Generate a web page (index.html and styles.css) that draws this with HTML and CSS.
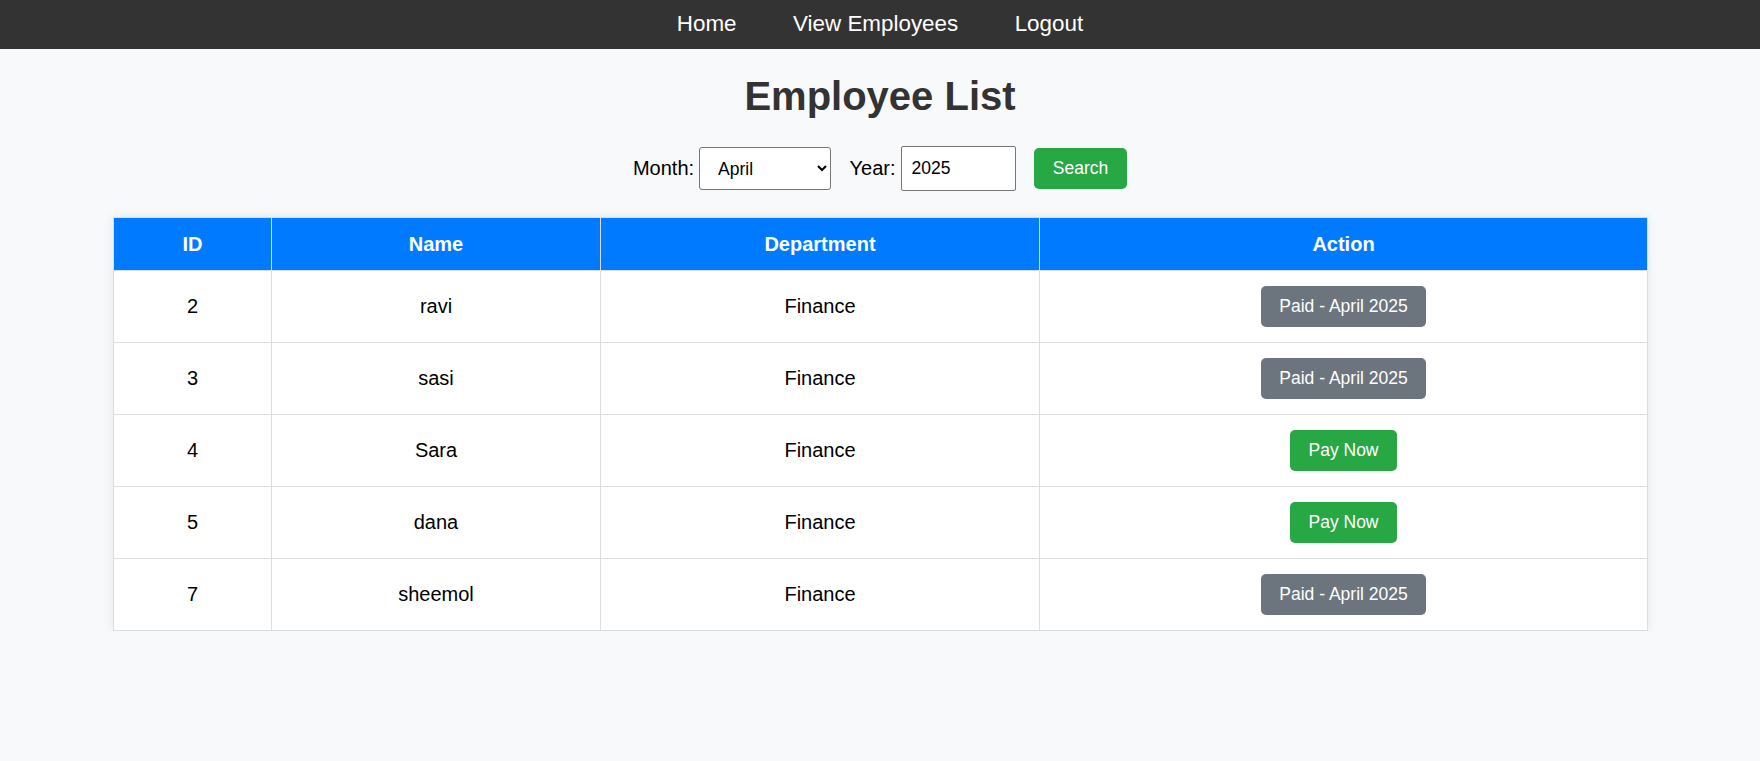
FILE: index.html
```html
<!DOCTYPE html>
<html lang="en">
<head>
<meta charset="utf-8">
<title>Employee List</title>
<link rel="stylesheet" href="styles.css">
</head>
<body>
<nav class="topnav">
  <a href="#">Home</a>
  <a href="#">View Employees</a>
  <a href="#">Logout</a>
</nav>
<h1 class="title">Employee List</h1>
<form class="filter">
  <label class="lbl" for="month">Month:</label>
  <select id="month" class="ctl sel">
    <option>January</option><option>February</option><option>March</option>
    <option selected>April</option><option>May</option><option>June</option>
    <option>July</option><option>August</option><option>September</option>
    <option>October</option><option>November</option><option>December</option>
  </select>
  <label class="lbl" for="year">Year:</label>
  <input id="year" class="ctl inp" type="number" value="2025">
  <button type="button" class="btn btn-green search">Search</button>
</form>
<div class="wrap">
  <table class="emp">
    <colgroup>
      <col class="c1"><col class="c2"><col class="c3"><col class="c4">
    </colgroup>
    <thead>
      <tr><th>ID</th><th>Name</th><th>Department</th><th>Action</th></tr>
    </thead>
    <tbody>
      <tr><td>2</td><td>ravi</td><td>Finance</td><td><span class="btn btn-gray">Paid - April 2025</span></td></tr>
      <tr><td>3</td><td>sasi</td><td>Finance</td><td><span class="btn btn-gray">Paid - April 2025</span></td></tr>
      <tr><td>4</td><td>Sara</td><td>Finance</td><td><span class="btn btn-green">Pay Now</span></td></tr>
      <tr><td>5</td><td>dana</td><td>Finance</td><td><span class="btn btn-green">Pay Now</span></td></tr>
      <tr><td>7</td><td>sheemol</td><td>Finance</td><td><span class="btn btn-gray">Paid - April 2025</span></td></tr>
    </tbody>
  </table>
</div>
</body>
</html>
```
FILE: styles.css
```css
* { box-sizing: border-box; }
body {
  margin: 0;
  font-family: "Liberation Sans", Arial, sans-serif;
  font-size: 20px;
  background: #f8f9fa;
  color: #000;
}
.topnav {
  background: #333;
  height: 49px;
  display: flex;
  justify-content: center;
  align-items: center;
  gap: 56.5px;
  padding-bottom: 1px;
}
.topnav a {
  color: #fff;
  text-decoration: none;
  font-size: 22.4px;
  line-height: 26px;
}
.title {
  margin: 24px 0 27px;
  font-size: 40px;
  line-height: 46px;
  font-weight: bold;
  text-align: center;
  color: #333;
}
.filter {
  display: flex;
  justify-content: center;
  align-items: center;
  height: 45px;
}
.lbl {
  font-size: 20px;
  margin-right: 5px;
}
.ctl {
  font-family: "Liberation Sans", Arial, sans-serif;
  font-size: 17.5px;
  color: #000;
  background: #fff;
  border: 1px solid #767676;
  margin-right: 18.5px;
}
.sel {
  width: 132px;
  height: 43px;
  border-radius: 3px;
  padding: 0 8px 0 14px;
}
.inp {
  width: 115px;
  height: 45px;
  border-radius: 2px;
  padding: 0 10px;
}
.inp::-webkit-inner-spin-button,
.inp::-webkit-outer-spin-button { -webkit-appearance: none; margin: 0; }
.btn {
  display: inline-block;
  font-family: "Liberation Sans", Arial, sans-serif;
  font-size: 17.5px;
  line-height: 20.5px;
  color: #fff;
  border: none;
  border-radius: 5px;
  padding: 10px 18.75px;
}
.btn-green { background: #28a745; }
.btn-gray { background: #6c757d; }
.search {
  width: 93px;
  height: 41px;
  padding: 0;
}
.wrap {
  padding: 0 113px;
  margin-top: 26px;
}
.emp {
  width: 100%;
  border-collapse: collapse;
  background: #fff;
  box-shadow: 0 0 10px rgba(0, 0, 0, 0.08);
  table-layout: fixed;
}
.c1 { width: 158px; }
.c2 { width: 329px; }
.c3 { width: 439px; }
.c4 { width: 608px; }
.emp th, .emp td {
  border: 1px solid #ddd;
  text-align: center;
  font-size: 20px;
}
.emp th {
  background: #007bff;
  color: #fff;
  font-weight: bold;
  height: 53px;
  padding: 0 15px;
}
.emp td {
  height: 72px;
  padding: 0 15px;
}
```
